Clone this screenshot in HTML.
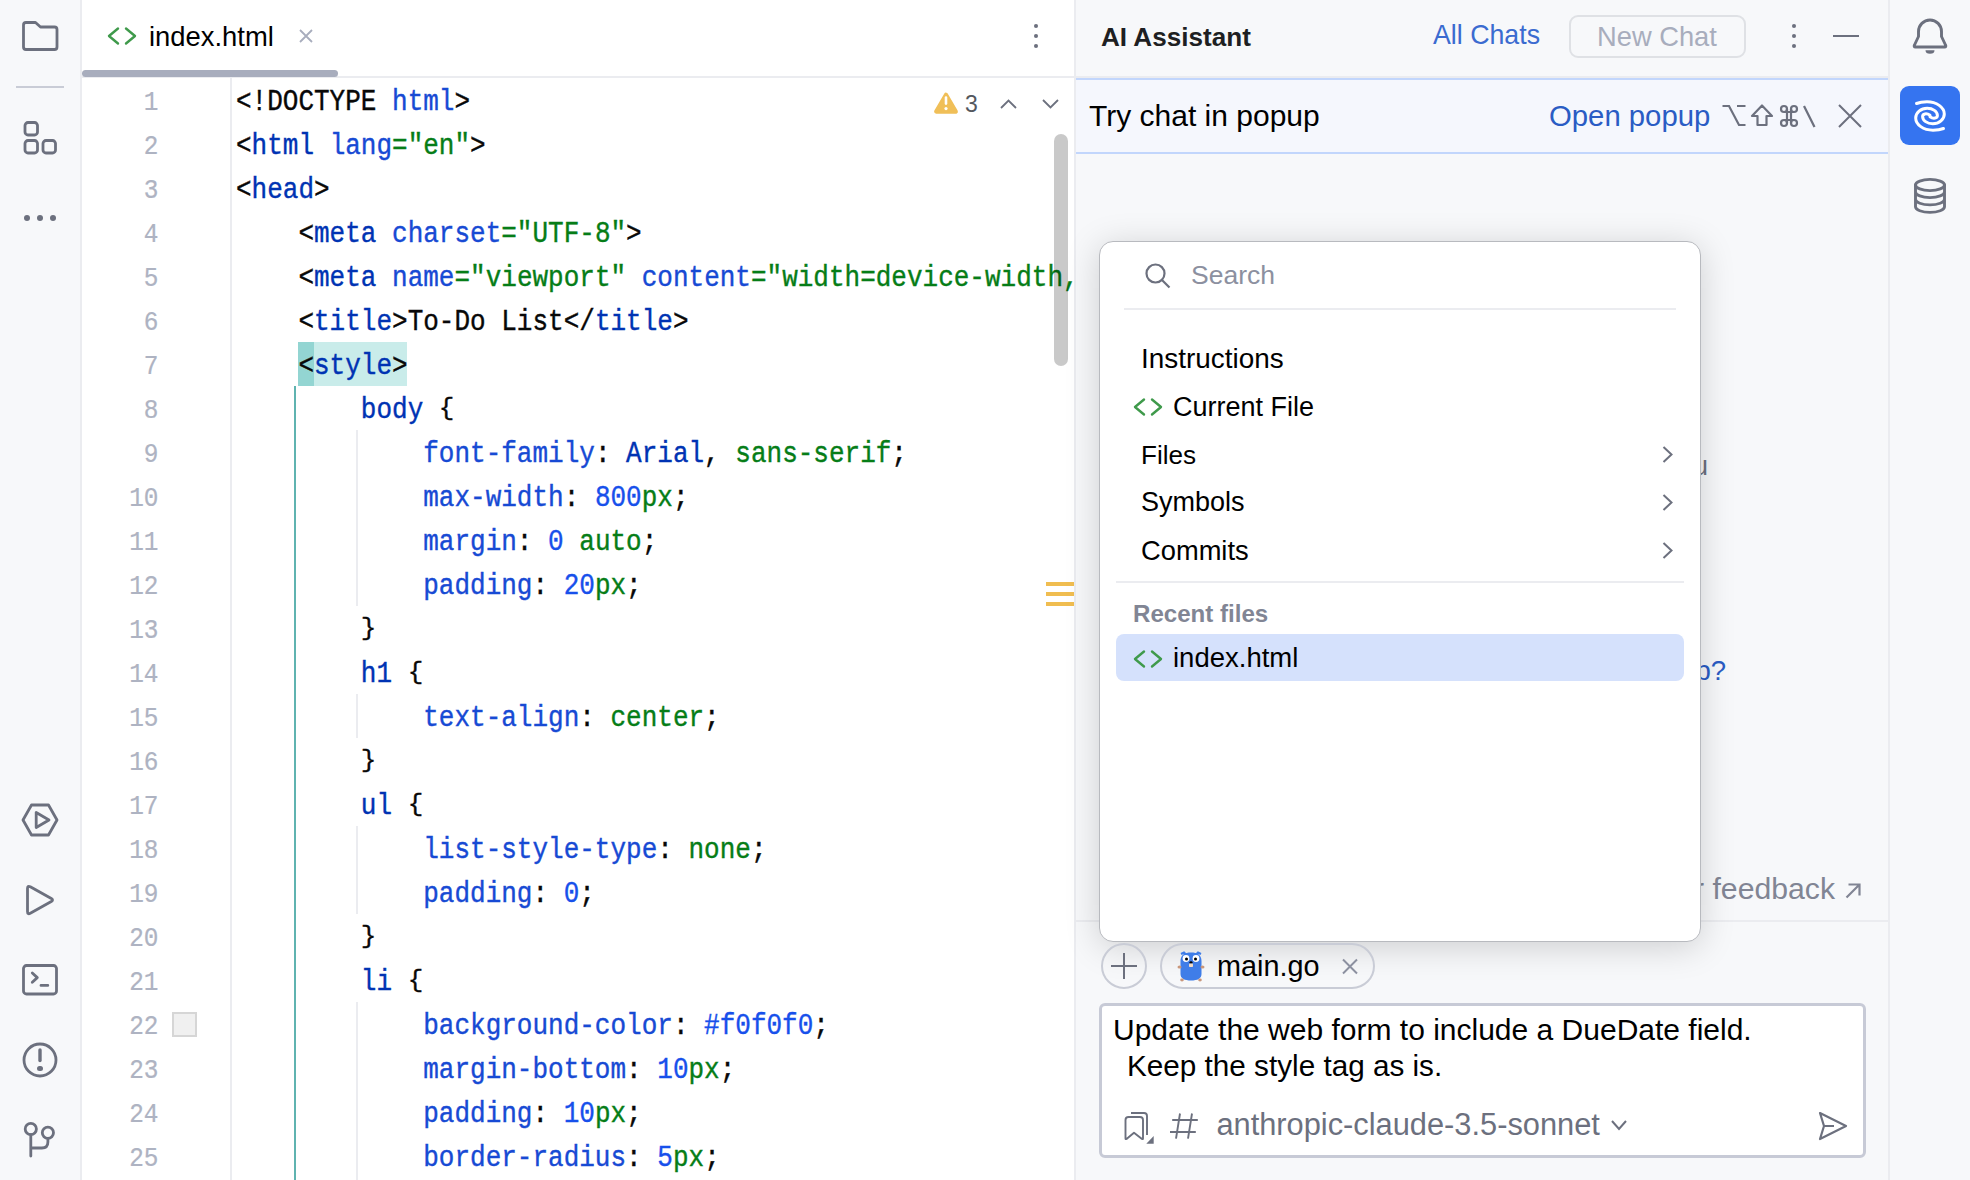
<!DOCTYPE html>
<html><head><meta charset="utf-8"><style>
*{margin:0;padding:0;box-sizing:border-box}
html,body{width:1970px;height:1180px;overflow:hidden;background:#fff;font-family:"Liberation Sans",sans-serif}
.a{position:absolute}
.t{position:absolute;white-space:pre}
.code{position:absolute;left:0;top:0;font-family:"Liberation Mono",monospace;font-size:26px;white-space:pre;transform:scaleY(1.1);transform-origin:0 28.9px;-webkit-text-stroke:0.35px currentColor}
.ln{position:absolute;font-family:"Liberation Mono",monospace;font-size:24.4px;color:#aeb3c2;text-align:right;width:60px;left:98.5px;transform:scaleY(1.12);transform-origin:0 28.4px;-webkit-text-stroke:0.2px currentColor}
svg{position:absolute;overflow:visible}
.br{font-weight:normal;display:inline-block;transform:scaleY(0.85);transform-origin:0 8px}
</style></head><body>
<div class="a" style="left:0;top:0;width:80px;height:1180px;background:#f7f8fa"></div><div class="a" style="left:80px;top:0;width:2px;height:1180px;background:#ebecf0"></div><div class="a" style="left:82px;top:76px;width:992px;height:2px;background:#ebecf0"></div><div class="a" style="left:82px;top:70px;width:256px;height:7px;border-radius:4px;background:#a8adbd"></div><div class="a" style="left:230px;top:78px;width:2px;height:1102px;background:#ebecf0"></div><div class="a" style="left:298px;top:342px;width:109px;height:44px;background:#c9ecea"></div><div class="a" style="left:298px;top:342px;width:16px;height:44px;background:#93d5d2"></div><div class="a" style="left:294px;top:386px;width:2px;height:794px;background:#5fb3b0"></div><div class="a" style="left:356px;top:430px;width:2px;height:176px;background:#ebecf0"></div><div class="a" style="left:356px;top:826px;width:2px;height:88px;background:#ebecf0"></div><div class="a" style="left:356px;top:1002px;width:2px;height:178px;background:#ebecf0"></div><div class="a" style="left:356px;top:694px;width:2px;height:44px;background:#ebecf0"></div><div class="a" style="left:0;top:0;width:1074px;height:1180px;overflow:hidden"><div class="ln" style="top:82px;line-height:44px">1</div><div class="code" style="left:236px;top:81px;line-height:44px;color:#080808"><span style="color:#080808">&lt;!DOCTYPE </span><span style="color:#174ad4">html</span><span style="color:#080808">&gt;</span></div><div class="ln" style="top:126px;line-height:44px">2</div><div class="code" style="left:236px;top:125px;line-height:44px;color:#080808"><span style="color:#080808">&lt;</span><span style="color:#0033b3">html</span><span style="color:#080808"> </span><span style="color:#174ad4">lang</span><span style="color:#067d17">="en"</span><span style="color:#080808">&gt;</span></div><div class="ln" style="top:170px;line-height:44px">3</div><div class="code" style="left:236px;top:169px;line-height:44px;color:#080808"><span style="color:#080808">&lt;</span><span style="color:#0033b3">head</span><span style="color:#080808">&gt;</span></div><div class="ln" style="top:214px;line-height:44px">4</div><div class="code" style="left:236px;top:213px;line-height:44px;color:#080808"><span style="color:#080808">    &lt;</span><span style="color:#0033b3">meta</span><span style="color:#080808"> </span><span style="color:#174ad4">charset</span><span style="color:#067d17">="UTF-8"</span><span style="color:#080808">&gt;</span></div><div class="ln" style="top:258px;line-height:44px">5</div><div class="code" style="left:236px;top:257px;line-height:44px;color:#080808"><span style="color:#080808">    &lt;</span><span style="color:#0033b3">meta</span><span style="color:#080808"> </span><span style="color:#174ad4">name</span><span style="color:#067d17">="viewport"</span><span style="color:#080808"> </span><span style="color:#174ad4">content</span><span style="color:#067d17">="width=device-width, initial-scale=1.0"</span><span style="color:#080808">&gt;</span></div><div class="ln" style="top:302px;line-height:44px">6</div><div class="code" style="left:236px;top:301px;line-height:44px;color:#080808"><span style="color:#080808">    &lt;</span><span style="color:#0033b3">title</span><span style="color:#080808">&gt;To-Do List&lt;/</span><span style="color:#0033b3">title</span><span style="color:#080808">&gt;</span></div><div class="ln" style="top:346px;line-height:44px">7</div><div class="code" style="left:236px;top:345px;line-height:44px;color:#080808"><span style="color:#080808">    &lt;</span><span style="color:#0033b3">style</span><span style="color:#080808">&gt;</span></div><div class="ln" style="top:390px;line-height:44px">8</div><div class="code" style="left:236px;top:389px;line-height:44px;color:#080808"><span style="color:#080808">        </span><span style="color:#0033b3">body</span><span style="color:#080808"> <b class="br">{</b></span></div><div class="ln" style="top:434px;line-height:44px">9</div><div class="code" style="left:236px;top:433px;line-height:44px;color:#080808"><span style="color:#080808">            </span><span style="color:#174ad4">font-family</span><span style="color:#080808">: </span><span style="color:#0033b3">Arial</span><span style="color:#080808">, </span><span style="color:#067d17">sans-serif</span><span style="color:#080808">;</span></div><div class="ln" style="top:478px;line-height:44px">10</div><div class="code" style="left:236px;top:477px;line-height:44px;color:#080808"><span style="color:#080808">            </span><span style="color:#174ad4">max-width</span><span style="color:#080808">: </span><span style="color:#1750eb">800</span><span style="color:#067d17">px</span><span style="color:#080808">;</span></div><div class="ln" style="top:522px;line-height:44px">11</div><div class="code" style="left:236px;top:521px;line-height:44px;color:#080808"><span style="color:#080808">            </span><span style="color:#174ad4">margin</span><span style="color:#080808">: </span><span style="color:#1750eb">0</span><span style="color:#080808"> </span><span style="color:#067d17">auto</span><span style="color:#080808">;</span></div><div class="ln" style="top:566px;line-height:44px">12</div><div class="code" style="left:236px;top:565px;line-height:44px;color:#080808"><span style="color:#080808">            </span><span style="color:#174ad4">padding</span><span style="color:#080808">: </span><span style="color:#1750eb">20</span><span style="color:#067d17">px</span><span style="color:#080808">;</span></div><div class="ln" style="top:610px;line-height:44px">13</div><div class="code" style="left:236px;top:609px;line-height:44px;color:#080808"><span style="color:#080808">        <b class="br">}</b></span></div><div class="ln" style="top:654px;line-height:44px">14</div><div class="code" style="left:236px;top:653px;line-height:44px;color:#080808"><span style="color:#080808">        </span><span style="color:#0033b3">h1</span><span style="color:#080808"> <b class="br">{</b></span></div><div class="ln" style="top:698px;line-height:44px">15</div><div class="code" style="left:236px;top:697px;line-height:44px;color:#080808"><span style="color:#080808">            </span><span style="color:#174ad4">text-align</span><span style="color:#080808">: </span><span style="color:#067d17">center</span><span style="color:#080808">;</span></div><div class="ln" style="top:742px;line-height:44px">16</div><div class="code" style="left:236px;top:741px;line-height:44px;color:#080808"><span style="color:#080808">        <b class="br">}</b></span></div><div class="ln" style="top:786px;line-height:44px">17</div><div class="code" style="left:236px;top:785px;line-height:44px;color:#080808"><span style="color:#080808">        </span><span style="color:#0033b3">ul</span><span style="color:#080808"> <b class="br">{</b></span></div><div class="ln" style="top:830px;line-height:44px">18</div><div class="code" style="left:236px;top:829px;line-height:44px;color:#080808"><span style="color:#080808">            </span><span style="color:#174ad4">list-style-type</span><span style="color:#080808">: </span><span style="color:#067d17">none</span><span style="color:#080808">;</span></div><div class="ln" style="top:874px;line-height:44px">19</div><div class="code" style="left:236px;top:873px;line-height:44px;color:#080808"><span style="color:#080808">            </span><span style="color:#174ad4">padding</span><span style="color:#080808">: </span><span style="color:#1750eb">0</span><span style="color:#080808">;</span></div><div class="ln" style="top:918px;line-height:44px">20</div><div class="code" style="left:236px;top:917px;line-height:44px;color:#080808"><span style="color:#080808">        <b class="br">}</b></span></div><div class="ln" style="top:962px;line-height:44px">21</div><div class="code" style="left:236px;top:961px;line-height:44px;color:#080808"><span style="color:#080808">        </span><span style="color:#0033b3">li</span><span style="color:#080808"> <b class="br">{</b></span></div><div class="ln" style="top:1006px;line-height:44px">22</div><div class="code" style="left:236px;top:1005px;line-height:44px;color:#080808"><span style="color:#080808">            </span><span style="color:#174ad4">background-color</span><span style="color:#080808">: </span><span style="color:#1750eb">#f0f0f0</span><span style="color:#080808">;</span></div><div class="ln" style="top:1050px;line-height:44px">23</div><div class="code" style="left:236px;top:1049px;line-height:44px;color:#080808"><span style="color:#080808">            </span><span style="color:#174ad4">margin-bottom</span><span style="color:#080808">: </span><span style="color:#1750eb">10</span><span style="color:#067d17">px</span><span style="color:#080808">;</span></div><div class="ln" style="top:1094px;line-height:44px">24</div><div class="code" style="left:236px;top:1093px;line-height:44px;color:#080808"><span style="color:#080808">            </span><span style="color:#174ad4">padding</span><span style="color:#080808">: </span><span style="color:#1750eb">10</span><span style="color:#067d17">px</span><span style="color:#080808">;</span></div><div class="ln" style="top:1138px;line-height:44px">25</div><div class="code" style="left:236px;top:1137px;line-height:44px;color:#080808"><span style="color:#080808">            </span><span style="color:#174ad4">border-radius</span><span style="color:#080808">: </span><span style="color:#1750eb">5</span><span style="color:#067d17">px</span><span style="color:#080808">;</span></div></div><div class="a" style="left:172px;top:1012px;width:25px;height:25px;background:#f0f0f0;border:2px solid #d6d6d6"></div><div class="a" style="left:1054px;top:134px;width:14px;height:232px;border-radius:7px;background:rgba(0,0,0,0.21)"></div><div class="a" style="left:1046px;top:582px;width:28px;height:4px;background:#f0bd50"></div><div class="a" style="left:1046px;top:592px;width:28px;height:4px;background:#f0bd50"></div><div class="a" style="left:1046px;top:602px;width:28px;height:4px;background:#f0bd50"></div><div class="t" style="left:149px;top:22.51px;font-size:27.4px;line-height:27.4px;color:#000;">index.html</div>
<svg style="left:107px;top:27px" width="30" height="18" viewBox="0 0 30 18"><path d="M11 1.5 L2 9 L11 16.5 M19 1.5 L28 9 L19 16.5" fill="none" stroke="#3f9a4b" stroke-width="2.4" stroke-linecap="round" stroke-linejoin="round"/></svg><svg style="left:299px;top:29px" width="14" height="14" viewBox="0 0 14 14"><path d="M1 1L13 13M13 1L1 13" stroke="#a8adbd" stroke-width="1.8"/></svg><svg style="left:1030px;top:22px" width="12" height="28" viewBox="0 0 12 28"><circle cx="6" cy="4" r="2.05" fill="#6c707e"/><circle cx="6" cy="14" r="2.05" fill="#6c707e"/><circle cx="6" cy="24" r="2.05" fill="#6c707e"/></svg><svg style="left:934px;top:92px" width="24" height="22" viewBox="0 0 24 22"><path d="M12 2.8 L21.8 19.6 L2.2 19.6 Z" fill="#f0bf58" stroke="#f0bf58" stroke-width="4.2" stroke-linejoin="round"/><rect x="10.7" y="4.3" width="2.6" height="8.6" rx="1.3" fill="#fff"/><circle cx="12" cy="16.6" r="1.6" fill="#fff"/></svg><div class="t" style="left:965px;top:92.53px;font-size:23px;line-height:23px;color:#54575e;">3</div>
<svg style="left:1000px;top:99px" width="17" height="10" viewBox="0 0 17 10"><path d="M1 9 L8.5 1.5 L16 9" fill="none" stroke="#6c707e" stroke-width="1.8"/></svg><svg style="left:1042px;top:99px" width="17" height="10" viewBox="0 0 17 10"><path d="M1 1 L8.5 8.5 L16 1" fill="none" stroke="#6c707e" stroke-width="1.8"/></svg><div class="a" style="left:1074px;top:0;width:2px;height:1180px;background:#ebecf0"></div><div class="a" style="left:1076px;top:0;width:812px;height:1180px;background:#f7f8fa"></div><div class="a" style="left:1888px;top:0;width:2px;height:1180px;background:#ebecf0"></div><div class="a" style="left:1890px;top:0;width:80px;height:1180px;background:#f7f8fa"></div><div class="t" style="left:1101px;top:23.91px;font-size:26.1px;line-height:26.1px;color:#1e1f22;font-weight:bold;">AI Assistant</div>
<div class="t" style="left:1433px;top:21.96px;font-size:26.75px;line-height:26.75px;color:#3b6bd0;">All Chats</div>
<div class="a" style="left:1569px;top:15px;width:177px;height:43px;border:2px solid #dfe1e5;border-radius:9px"></div><div class="t" style="left:1597px;top:22.69px;font-size:27.3px;line-height:27.3px;color:#a8adbd;">New Chat</div>
<svg style="left:1788px;top:22px" width="12" height="28" viewBox="0 0 12 28"><circle cx="6" cy="4" r="2.05" fill="#6c707e"/><circle cx="6" cy="14" r="2.05" fill="#6c707e"/><circle cx="6" cy="24" r="2.05" fill="#6c707e"/></svg><div class="a" style="left:1833px;top:35px;width:26px;height:2px;background:#6c707e"></div><div class="a" style="left:1076px;top:76px;width:812px;height:2px;background:#ebecf0"></div><div class="a" style="left:1076px;top:78px;width:812px;height:76px;background:#f5f7fd;border-top:2px solid #c2d6fc;border-bottom:2px solid #c2d6fc"></div><div class="t" style="left:1089px;top:101.11px;font-size:30px;line-height:30px;color:#000;">Try chat in popup</div>
<div class="t" style="left:1549px;top:100.90px;font-size:29.3px;line-height:29.3px;color:#2a5cc4;">Open popup</div>
<svg style="left:1838px;top:104px" width="24" height="24" viewBox="0 0 24 24"><path d="M1 1L23 23M23 1L1 23" stroke="#6c707e" stroke-width="2"/></svg><svg style="left:1722px;top:104px" width="94" height="24" viewBox="0 0 94 24" fill="none" stroke="#6c707e" stroke-width="2.2">
<path d="M0.5 2 H7 L17 21 H23.5 M15 2 H23.5"/>
<path d="M40 1.5 L50 12 H44.5 V21 H35.5 V12 H30 Z" stroke-linejoin="round"/>
<path d="M62 8 H72 M62 16 H72 M65 5 V19 M69 5 V19"/><circle cx="62" cy="5" r="3"/><circle cx="72" cy="5" r="3"/><circle cx="62" cy="19" r="3"/><circle cx="72" cy="19" r="3"/>
<path d="M82 2 L92.5 23"/>
</svg><div class="a" style="left:1076px;top:920px;width:812px;height:2px;background:#ebecf0"></div><div class="t" style="left:1400px;width:308px;text-align:right;top:453px;font-size:27px;line-height:27px;color:#6c707e">about you</div><div class="t" style="left:1400px;width:326px;text-align:right;top:657px;font-size:27.5px;line-height:27.5px;color:#2a5cc4">Need help?</div><div class="t" style="left:1433px;width:402px;text-align:right;top:874.4px;font-size:30.2px;line-height:30.2px;color:#818594">Share your feedback</div><svg style="left:1845px;top:883px" width="16" height="16" viewBox="0 0 16 16"><path d="M1.5 14.5 L14 2 M3.5 1.5 H14.5 V12.5" fill="none" stroke="#818594" stroke-width="2.2"/></svg><div class="a" style="left:1099px;top:241px;width:602px;height:701px;background:#fff;border:1.5px solid #b8babf;border-radius:14px;box-shadow:0 5px 34px rgba(0,0,0,0.17)"></div><svg style="left:1145px;top:263px" width="26" height="26" viewBox="0 0 26 26"><circle cx="10.5" cy="10.5" r="9" fill="none" stroke="#6c707e" stroke-width="2.2"/><path d="M17 17 L24.5 24.5" stroke="#6c707e" stroke-width="2.2"/></svg><div class="t" style="left:1191px;top:262.17px;font-size:26.5px;line-height:26.5px;color:#8c90a0;">Search</div>
<div class="a" style="left:1124px;top:308px;width:552px;height:2px;background:#ebecf0"></div><div class="t" style="left:1141px;top:345.38px;font-size:27.9px;line-height:27.9px;color:#000;">Instructions</div>
<div class="t" style="left:1173px;top:394.14px;font-size:27px;line-height:27px;color:#000;">Current File</div>
<div class="t" style="left:1141px;top:441.91px;font-size:26.1px;line-height:26.1px;color:#000;">Files</div>
<div class="t" style="left:1141px;top:489.14px;font-size:27px;line-height:27px;color:#000;">Symbols</div>
<div class="t" style="left:1141px;top:536.89px;font-size:27.3px;line-height:27.3px;color:#000;">Commits</div>
<svg style="left:1662px;top:446px" width="11" height="17" viewBox="0 0 11 17"><path d="M1.5 1 L9.5 8.5 L1.5 16" fill="none" stroke="#6c707e" stroke-width="2"/></svg><svg style="left:1662px;top:494px" width="11" height="17" viewBox="0 0 11 17"><path d="M1.5 1 L9.5 8.5 L1.5 16" fill="none" stroke="#6c707e" stroke-width="2"/></svg><svg style="left:1662px;top:542px" width="11" height="17" viewBox="0 0 11 17"><path d="M1.5 1 L9.5 8.5 L1.5 16" fill="none" stroke="#6c707e" stroke-width="2"/></svg><div class="a" style="left:1116px;top:581px;width:568px;height:2px;background:#ebecf0"></div><div class="t" style="left:1133px;top:602.00px;font-size:24.1px;line-height:24.1px;color:#818594;font-weight:bold;">Recent files</div>
<div class="a" style="left:1116px;top:634px;width:568px;height:47px;border-radius:8px;background:#d5e1fc"></div><div class="t" style="left:1173px;top:644.12px;font-size:27.5px;line-height:27.5px;color:#000;">index.html</div>
<svg style="left:1133px;top:398px" width="30" height="18" viewBox="0 0 30 18"><path d="M11 1.5 L2 9 L11 16.5 M19 1.5 L28 9 L19 16.5" fill="none" stroke="#3f9a4b" stroke-width="2.4" stroke-linecap="round" stroke-linejoin="round"/></svg><svg style="left:1133px;top:650px" width="30" height="18" viewBox="0 0 30 18"><path d="M11 1.5 L2 9 L11 16.5 M19 1.5 L28 9 L19 16.5" fill="none" stroke="#3f9a4b" stroke-width="2.4" stroke-linecap="round" stroke-linejoin="round"/></svg><div class="a" style="left:1101px;top:943px;width:46px;height:46px;border:2px solid #c9ccd6;border-radius:50%"></div><svg style="left:1111px;top:953px" width="26" height="26" viewBox="0 0 26 26"><path d="M13 0 V26 M0 13 H26" stroke="#6c707e" stroke-width="2"/></svg><div class="a" style="left:1160px;top:943px;width:215px;height:46px;border:2px solid #c9ccd6;border-radius:23px"></div><svg style="left:1176px;top:951px" width="30" height="31" viewBox="0 0 30 31"><path d="M5 3 L8 1.5 L10 3.5 M25 3 L22 1.5 L20 3.5" fill="#3f7de8" stroke="#3f7de8" stroke-width="2"/><path d="M4.5 10 C4.5 4 8.5 1.5 15 1.5 C21.5 1.5 25.5 4 25.5 10 V23 C25.5 27.5 21.5 29.5 15 29.5 C8.5 29.5 4.5 27.5 4.5 23 Z" fill="#3f7de8"/><circle cx="10" cy="7.5" r="3.4" fill="#fff"/><circle cx="20" cy="7.5" r="3.4" fill="#fff"/><circle cx="10.5" cy="8" r="1.5" fill="#000"/><circle cx="19.5" cy="8" r="1.5" fill="#000"/><ellipse cx="15" cy="11.5" rx="1.6" ry="1.2" fill="#000"/><rect x="13" y="12.5" width="4" height="3.5" rx="0.8" fill="#f3dcc6"/><ellipse cx="3.5" cy="16" rx="2" ry="1.6" fill="#c9977c"/><ellipse cx="26.5" cy="16" rx="2" ry="1.6" fill="#c9977c"/><ellipse cx="6" cy="29" rx="1.8" ry="1.4" fill="#c9977c"/><ellipse cx="24" cy="29" rx="1.8" ry="1.4" fill="#c9977c"/></svg><div class="t" style="left:1217px;top:951.62px;font-size:28.8px;line-height:28.8px;color:#000;">main.go</div>
<svg style="left:1342px;top:959px" width="16" height="15" viewBox="0 0 16 15"><path d="M1 0.5L15 14.5M15 0.5L1 14.5" stroke="#8c90a0" stroke-width="2"/></svg><div class="a" style="left:1099px;top:1003px;width:767px;height:155px;background:#fff;border:3px solid #c7cad6;border-radius:6px"></div><div class="t" style="left:1113px;top:1014.61px;font-size:30px;line-height:30px;color:#000;">Update the web form to include a DueDate field.</div>
<div class="t" style="left:1127px;top:1050.86px;font-size:29.7px;line-height:29.7px;color:#000;">Keep the style tag as is.</div>
<svg style="left:1110px;top:1100px" width="100" height="50" viewBox="0 0 100 50" fill="none" stroke="#6c707e" stroke-width="1.9" stroke-linejoin="round" stroke-linecap="round"><path d="M15.5 38.5 V20 Q15.5 17 18.5 17 H30 Q33 17 33 20 V38.5 Q33 39.5 32 39 L24 32.7 L16.5 39 Q15.5 39.5 15.5 38.5 Z"/><path d="M21 13 H34 Q37 13 37 16 V35" stroke-linecap="butt"/><path d="M43.7 36 V43.7 H36.3 Z" fill="#6c707e" stroke="none"/><path d="M70 13.5 L66 38.6 M82 13.5 L78 38.6 M62.2 20 H87.8 M60 32 H85.8" stroke-linecap="butt"/></svg><div class="t" style="left:1216.4px;top:1109.93px;font-size:30.8px;line-height:30.8px;color:#6c707e;">anthropic-claude-3.5-sonnet</div>
<svg style="left:1611px;top:1120px" width="16" height="12" viewBox="0 0 16 12"><path d="M1 1 L8 9 L15 1" fill="none" stroke="#6c707e" stroke-width="2"/></svg><svg style="left:1818px;top:1111px" width="30" height="30" viewBox="0 0 30 30"><path d="M2 2 L28 15 L2 28 L6 15 Z M6 15 H16" fill="none" stroke="#6c707e" stroke-width="2.2" stroke-linejoin="round"/></svg><svg style="left:0;top:0" width="80" height="1180" viewBox="0 0 80 1180" fill="none" stroke="#6c707e" stroke-width="2.8" stroke-linejoin="round" stroke-linecap="round">
<path d="M23.5 25 Q23.5 22.5 26 22.5 H35.5 L40.5 27 H54.5 Q57 27 57 29.5 V47 Q57 49.5 54.5 49.5 H26 Q23.5 49.5 23.5 47 Z"/>
<rect x="25" y="122.5" width="12.5" height="12.5" rx="3"/><rect x="25" y="140.5" width="12.5" height="12.5" rx="3"/><rect x="43" y="140.5" width="12.5" height="12.5" rx="3"/>
<path d="M31.5 805 H48.5 L57 820 L48.5 835 H31.5 L23 820 Z"/><path d="M36.2 812.5 V827.5 L49 820 Z"/>
<path d="M27.5 888.5 Q27.5 885.2 30.3 886.8 L51.3 898.4 Q53.8 900 51.3 901.6 L30.3 913.2 Q27.5 914.8 27.5 911.5 Z"/>
<rect x="23.5" y="965.5" width="33" height="28.5" rx="3"/><path d="M32.3 973 L37.3 977.6 L32.3 982.2 M41 985.4 H47.8"/>
<circle cx="40" cy="1060" r="16"/><path d="M40 1050 V1060.5" stroke-width="3.4"/>
<circle cx="30.8" cy="1129" r="5.6"/><circle cx="47.9" cy="1132.8" r="5.6"/><path d="M30.8 1134.6 V1156 M47.9 1138.4 V1142 Q47.9 1148 41.9 1148 H30.8"/>
</svg><div class="a" style="left:16px;top:86px;width:48px;height:2px;background:#c9ccd6"></div><div class="a" style="left:24px;top:215px;width:6px;height:6px;border-radius:3px;background:#6c707e"></div><div class="a" style="left:37px;top:215px;width:6px;height:6px;border-radius:3px;background:#6c707e"></div><div class="a" style="left:50px;top:215px;width:6px;height:6px;border-radius:3px;background:#6c707e"></div><div class="a" style="left:37.3px;top:1065.8px;width:5.4px;height:5.4px;border-radius:3px;background:#6c707e"></div><div class="a" style="left:1900px;top:86px;width:60px;height:59px;border-radius:9px;background:#3574f0"></div><svg style="left:1890px;top:0" width="80" height="240" viewBox="0 0 80 240" fill="none" stroke="#6c707e" stroke-width="2.9" stroke-linecap="round" stroke-linejoin="round">
<path d="M28.5 31.5 A11.5 11.5 0 0 1 51.5 31.5 V36.5 L55.5 45 Q56.5 47 54.5 47 H25.5 Q23.5 47 24.5 45 L28.5 36.5 Z"/><path d="M35.5 50.2 H44.5 A4.5 3.6 0 0 1 35.5 50.2 Z" fill="#6c707e" stroke="none"/>
<ellipse cx="40" cy="185" rx="14.5" ry="5.6"/><path d="M25.5 185 V206.8 M54.5 185 V206.8 M25.5 192 A14.5 5.6 0 0 0 54.5 192 M25.5 199.3 A14.5 5.6 0 0 0 54.5 199.3 M25.5 206.8 A14.5 5.6 0 0 0 54.5 206.8"/>
<path d="M26.50 103.50 C29.50 102.30 33.00 101.80 37.00 101.80 C46.55 101.80 54.30 107.26 54.30 114.00 C54.30 119.40 49.15 123.80 42.80 123.80 C37.17 123.80 32.60 120.50 32.60 116.50 C32.60 113.80 36.50 112.80 40.00 115.30" stroke="#fff" stroke-width="3"/><path d="M53.50 128.50 C50.50 129.70 47.00 130.20 43.00 130.20 C33.45 130.20 25.70 124.74 25.70 118.00 C25.70 112.60 30.85 108.20 37.20 108.20 C42.83 108.20 47.40 111.50 47.40 115.50 C47.40 118.20 43.50 119.20 40.00 116.70" stroke="#fff" stroke-width="3"/>
</svg></body></html>
